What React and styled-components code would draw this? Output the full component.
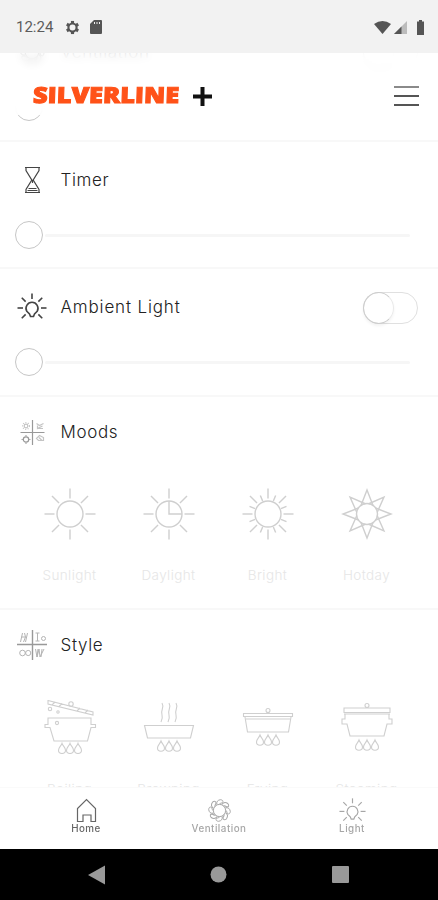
import React, { useState } from 'react';
import styled, { createGlobalStyle } from 'styled-components';

const GlobalStyle = createGlobalStyle`
  * {
    box-sizing: border-box;
  }

  body {
    margin: 0;
    background: #fff;
    font-family: Inter, Roboto, sans-serif;
  }
`;

const Phone = styled.div`
  width: 438px;
  height: 900px;
  display: flex;
  flex-direction: column;
  overflow: hidden;
  background: #fff;
`;

const StatusBar = styled.div`
  height: 53px;
  flex: none;
  display: flex;
  align-items: center;
  padding: 1px 12px 0 16px;
  background: #f2f2f2;
  color: #5c5c5c;
  font-family: Roboto, sans-serif;
  font-size: 15px;

  svg {
    display: block;
  }
`;

const StatusGroup = styled.div`
  display: flex;
  align-items: center;
  gap: ${(props) => props.$gap};
  margin-left: ${(props) => props.$left};
`;

const AppBody = styled.div`
  flex: 1;
  min-height: 0;
  position: relative;
  overflow: hidden;
`;

const Header = styled.header`
  position: absolute;
  top: 0;
  left: 0;
  right: 0;
  height: 62px;
  display: flex;
  align-items: center;
  justify-content: space-between;
  padding: 24px 18px 0 30px;
  background: rgba(255, 255, 255, 0.84);
  backdrop-filter: blur(4px);
  z-index: 1;

  svg {
    display: block;
    overflow: visible;
  }
`;

const MenuButton = styled.button`
  width: 27px;
  height: 20px;
  display: flex;
  flex-direction: column;
  justify-content: space-between;
  padding: 0 1px;
  border: none;
  background: none;

  span {
    height: 2px;
    background: #555;
  }

  span:first-child {
    background: #8a8a8a;
  }
`;

/* scrolled a little, so the first section sits partly below the header */
const Scroller = styled.main`
  margin-top: -39px;
`;

const Section = styled.section`
  height: ${(props) => props.$height}px;
  border-bottom: 2px solid #f8f8f8;
`;

const TitleRow = styled.div`
  height: ${(props) => props.$height || 76}px;
  display: flex;
  align-items: center;
  padding: 0 20px 0 17px;
  color: #444;

  svg {
    display: block;
    flex: none;
  }
`;

const Title = styled.h2`
  flex: 1;
  margin: 0 0 0 13.5px;
  color: #222;
  font-size: 17px;
  font-weight: 300;
  line-height: 24px;
  letter-spacing: ${(props) => props.$spacing || 0.65}px;
`;

const Slider = styled.div`
  height: 28px;
  margin: 3px 28px 0 15px;
  display: flex;
  align-items: center;
`;

const Thumb = styled.span`
  width: 28px;
  height: 28px;
  flex: none;
  border: 1.4px solid #c6c6c6;
  border-radius: 50%;
  background: #fff;
`;

const Track = styled.span`
  height: 3px;
  flex: 1;
  margin-left: 2px;
  border-radius: 2px;
  background: #f6f6f6;
`;

const Switch = styled.button`
  width: 55px;
  height: 32px;
  margin-top: 2px;
  padding: 0;
  display: flex;
  border: 1px solid #e0e0e0;
  border-radius: 16px;
  background: #fff;

  span {
    width: 31px;
    height: 32px;
    margin: -1px 0 0 -1px;
    border: 1px solid #cdcdcd;
    border-right-color: #eaeaea;
    border-radius: 50%;
    box-shadow: 0 2px 3px rgba(0, 0, 0, 0.05);
  }
`;

const Options = styled.div`
  display: grid;
  grid-template-columns: repeat(4, 99px);
  padding: ${(props) => props.$top}px 0 0 20px;
`;

const Option = styled.div`
  display: flex;
  flex-direction: column;
  align-items: center;
  gap: 26px;
  color: #cfcfcf;

  svg {
    display: block;
  }
`;

const OptionLabel = styled.span`
  color: #e6e6e6;
  font-size: 13.5px;
  font-weight: 300;
  line-height: 18px;
  letter-spacing: 0.4px;
`;

const TabBar = styled.nav`
  position: absolute;
  left: 0;
  right: 0;
  bottom: 0;
  height: 62px;
  display: grid;
  grid-template-columns: repeat(3, 133px);
  justify-content: center;
  border-top: 1px solid #fafafa;
  background: rgba(255, 255, 255, 0.94);
  backdrop-filter: blur(3px);
`;

const Tab = styled.div`
  display: flex;
  flex-direction: column;
  align-items: center;
  padding-top: 9px;
  color: ${(props) => (props.$active ? '#666' : '#a6a6a6')};
  font-size: 9.8px;
  font-weight: 500;
  line-height: 12px;
  letter-spacing: 0.5px;

  svg {
    display: block;
    margin-bottom: -1px;
  }
`;

const SystemBar = styled.div`
  height: 51px;
  flex: none;
  display: flex;
  align-items: center;
  justify-content: space-between;
  padding: 0 89px 0 88px;
  background: #000;
`;

const Icon = ({ size = 30, box = 30, width = 1.2, children }) => (
  <svg
    width={size}
    height={size}
    viewBox={`0 0 ${box} ${box}`}
    fill="none"
    stroke="currentColor"
    strokeWidth={width}
  >
    {children}
  </svg>
);

const Rays = ({ center, from, to, count = 8, offset = 0 }) =>
  Array.from({ length: count }, (_, i) => (
    <line
      key={i}
      x1={center}
      y1={center - from}
      x2={center}
      y2={center - to}
      transform={`rotate(${(i * 360) / count + offset} ${center} ${center})`}
    />
  ));

const TimerIcon = () => (
  <Icon width={1.2}>
    <path d="M8 2.5h15M8 27.5h15M9 3v2.5l5.8 9.5L9 24.5V27M22 3v2.5L16.200 15l5.800 9.5V27M15.500 15v3M11.500 23.500h8M10.500 25.500h10" />
  </Icon>
);

const BulbIcon = ({ size, width = 1.6 }) => (
  <Icon size={size} width={width}>
    {[-135, -90, -45, 0, 45, 90, 135].map((angle) => (
      <line key={angle} x1="15" y1="1.5" x2="15" y2="7" transform={`rotate(${angle} 15 16)`} />
    ))}
    <path d="M13.500 24.500l-1-2.500-2.700-2.700a6 6 0 1 1 10.400 0L17.500 22l-1 2.500z" />
  </Icon>
);

const FanIcon = ({ size = 30 }) => (
  <Icon size={size} width={1.1}>
    <circle cx="15" cy="15" r="6.8" />
    {Array.from({ length: 8 }, (_, i) => (
      <path
        key={i}
        d="M12 8.500c-.5-3.500 1-5 4-5.500c3 .3 3.500 2 2 3.500c-1.500.3-3 .8-3.500 1.800"
        transform={`rotate(${i * 45} 15 15)`}
      />
    ))}
  </Icon>
);

const MoodsIcon = () => (
  <Icon width={1.2}>
    <path d="M15.500 3v25M3.500 15.500h24" stroke="#999" />
    <g stroke="#c4c4c4">
      <circle cx="9" cy="9" r="1.8" />
      <circle cx="9" cy="9" r="3.4" strokeDasharray="1 1.5" />
      <path d="M19.500 6.500l3 2 4-2M20 11.500h6M20.500 8.500v3l5-2.500" />
      <path d="M19.500 21.500l3-3 4 2v3h-5zM22 20.500l3 3" />
    </g>
    <circle cx="9" cy="22.5" r="2.7" stroke="#999" />
    <path d="M4.500 22.500H6M12 22.500h1.500M9 18v1.500M9 25.500V27" stroke="#aaa" />
  </Icon>
);

const StyleIcon = () => (
  <Icon width={1}>
    <path d="M15.500 0v30M0 14.500h30" stroke="#999" strokeWidth="1.4" />
    <g stroke="#b4b4b4">
      <path d="M5.500 3l-2 9M7.500 3l1 4-2 5M10.500 3l-2 9M4.500 7h4" />
      <path d="M18.500 3h4M20.500 3v8M18.500 11h4" />
      <circle cx="26.5" cy="8.5" r="2" />
      <circle cx="5.5" cy="23" r="2.8" />
      <circle cx="11.2" cy="23" r="2.6" />
      <path d="M18.500 19l1.500 8 2-8 1 8 4-8M21 19l-1 8M25 19l-1 8" />
    </g>
  </Icon>
);

const SunIcon = ({ type }) => (
  <Icon size={52} box={52} width={1.4}>
    {type === 'hotday' ? (
      <>
        <circle cx="26" cy="26" r="10.5" />
        {Array.from({ length: 8 }, (_, i) => (
          <path key={i} d="M20 17.500L26 2L32 17.500" transform={`rotate(${i * 45} 26 26)`} />
        ))}
      </>
    ) : (
      <>
        <circle cx="26" cy="26" r="13" />
        <Rays center={26} from={15.5} to={25.5} />
        {type === 'daylight' && <path d="M26 13v13h13" />}
        {type === 'bright' && <Rays center={26} from={14} to={20} offset={22.5} />}
      </>
    )}
  </Icon>
);

const Flames = ({ y, x = 27 }) =>
  [-8, 0, 8].map((dx) => (
    <path
      key={dx}
      d={`M${x + dx} ${y}c-1 3-3.500 4-3.500 7a3.500 3.200 0 0 0 7 0c0-3-2.500-4-3.500-7z`}
    />
  ));

const dishes = {
  boiling: (
    <>
      <path d="M5 0.500L50 12v3L5 4zM9 5l3-3M16 6.500l3-3M34 11l3-3M42 13l3-3" />
      <circle cx="28" cy="4" r="2.2" />
      <circle cx="7" cy="9" r="1.7" />
      <circle cx="15" cy="12" r="1.2" />
      <path d="M5 24.500V18h43v6.500h4.500v3H48L44.500 41H11L7 27.500H2v-3z" />
      <circle cx="14" cy="23" r="1.6" />
      <Flames y={43.3} />
    </>
  ),
  browning: (
    <>
      <path d="M20 3c3 5-2 7 0 12c1 3 0 5-1 7M27 3c3 5-2 7 0 12c1 3 0 5-1 7M34 3c3 5-2 7 0 12c1 3 0 5-1 7" />
      <path d="M2.500 25.500h49l-3 12.500h-43z" />
      <Flames y={41} />
    </>
  ),
  frying: (
    <>
      <circle cx="27" cy="10.5" r="2" />
      <path d="M2.500 13.500h49v3h-49zM4 17l2.500 15h41L50 17M5 19h44" />
      <Flames y={35} />
    </>
  ),
  steaming: (
    <>
      <circle cx="27" cy="5.5" r="2" />
      <path d="M4 8h46v4.500H4zM4 14h46M5 14.500v4.500H2v5h5L10 36h34l3-12h5v-5h-3v-4.500" />
      <Flames y={40} />
    </>
  ),
};

const moods = [
  { id: 'sunlight', name: 'Sunlight' },
  { id: 'daylight', name: 'Daylight' },
  { id: 'bright', name: 'Bright' },
  { id: 'hotday', name: 'Hotday' },
];

const styles = [
  { id: 'boiling', name: 'Boiling' },
  { id: 'browning', name: 'Browning' },
  { id: 'frying', name: 'Frying' },
  { id: 'steaming', name: 'Steaming' },
];

function Toggle() {
  const [on, setOn] = useState(false);
  return (
    <Switch role="switch" aria-checked={on} onClick={() => setOn(!on)}>
      <span />
    </Switch>
  );
}

function SliderSection({ icon, title, toggle, height, spacing }) {
  return (
    <Section $height={height}>
      <TitleRow>
        {icon}
        <Title $spacing={spacing}>{title}</Title>
        {toggle && <Toggle />}
      </TitleRow>
      <Slider>
        <Thumb />
        <Track />
      </Slider>
    </Section>
  );
}

function App() {
  return (
    <Phone>
      <GlobalStyle />
      <StatusBar>
        12:24
        <StatusGroup $gap="10px" $left="12px">
          <svg width="15" height="15" viewBox="0 0 24 24" fill="none" stroke="#555">
            <circle cx="12" cy="12" r="6.5" strokeWidth="3.4" />
            {[0, 60, 120, 180, 240, 300].map((angle) => (
              <path
                key={angle}
                d="M12 5V1.500"
                strokeWidth="5"
                transform={`rotate(${angle} 12 12)`}
              />
            ))}
          </svg>
          <svg width="12" height="14" viewBox="0 0 12 14" fill="#555">
            <path fillRule="evenodd" d="M4 0h7q1 0 1 1v12q0 1-1 1H1q-1 0-1-1V4zM4 2v2h1V2zM6.500 2v2h1V2zM9 2v2h1V2z" />
          </svg>
        </StatusGroup>
        <StatusGroup $gap="3px" $left="auto">
          <svg width="17" height="13" viewBox="0 0 17 13" fill="#555">
            <path d="M0 3q8.500-6 17 0L8.500 13z" />
          </svg>
          <svg width="13" height="13" viewBox="0 0 13 13">
            <path d="M13 0v13H0z" fill="#bcbcbc" />
            <path d="M7.500 5.500V13H0z" fill="#555" />
          </svg>
          <svg width="16" height="15" viewBox="0 0 16 15" fill="#555">
            <path d="M7 1.500H9V0h3v1.500h2V15H7z" />
          </svg>
        </StatusGroup>
      </StatusBar>

      <AppBody>
        <Header>
          <svg width="186" height="24" viewBox="0 0 186 24">
            <text
              x="2.5"
              y="18.5"
              textLength="146"
              lengthAdjust="spacingAndGlyphs"
              fill="#ff5218"
              stroke="#ff5218"
              strokeWidth="1"
              fontFamily="Open Sans, sans-serif"
              fontSize="22"
              fontWeight="800"
              transform="translate(1 0) skewX(-2)"
            >
              SILVERLINE
            </text>
            <path d="M172.500 3v19M163 12.500h19" stroke="#111" strokeWidth="4" />
          </svg>
          <MenuButton aria-label="Menu">
            <span />
            <span />
            <span />
          </MenuButton>
        </Header>

        <Scroller>
          <SliderSection icon={<FanIcon />} title="Ventilation" toggle height={128} />
          <SliderSection icon={<TimerIcon />} title="Timer" height={127} />
          <SliderSection
            icon={<BulbIcon />}
            title="Ambient Light"
            toggle
            height={128}
            spacing={0.85}
          />

          <Section $height={213}>
            <TitleRow $height={70}>
              <MoodsIcon />
              <Title>Moods</Title>
            </TitleRow>
            <Options $top={21}>
              {moods.map((mood) => (
                <Option key={mood.id}>
                  <SunIcon type={mood.id} />
                  <OptionLabel>{mood.name}</OptionLabel>
                </Option>
              ))}
            </Options>
          </Section>

          <Section $height={213}>
            <TitleRow $height={70}>
              <StyleIcon />
              <Title>Style</Title>
            </TitleRow>
            <Options $top={20}>
              {styles.map((style) => (
                <Option key={style.id}>
                  <Icon size={54} box={54} width={1.1}>
                    {dishes[style.id]}
                  </Icon>
                  <OptionLabel>{style.name}</OptionLabel>
                </Option>
              ))}
            </Options>
          </Section>
        </Scroller>

        <TabBar>
          <Tab $active>
            <Icon size={27} box={27}>
              <path d="M4.500 24.500V11.500L13.500 2.500L22.500 11.500v13h-4.500v-6.500h-8v6.500z" />
            </Icon>
            Home
          </Tab>
          <Tab>
            <FanIcon size={27} />
            Ventilation
          </Tab>
          <Tab>
            <BulbIcon size={27} width={1.3} />
            Light
          </Tab>
        </TabBar>
      </AppBody>

      <SystemBar>
        <svg width="17" height="20" viewBox="0 0 17 20" fill="#999">
          <path d="M0 10L17 .5v19z" />
        </svg>
        <svg width="17" height="17" viewBox="0 0 17 17" fill="#999">
          <circle cx="8.5" cy="8.5" r="8" />
        </svg>
        <svg width="17" height="17" viewBox="0 0 17 17" fill="#999">
          <rect width="17" height="17" rx="1" />
        </svg>
      </SystemBar>
    </Phone>
  );
}

export default App;
